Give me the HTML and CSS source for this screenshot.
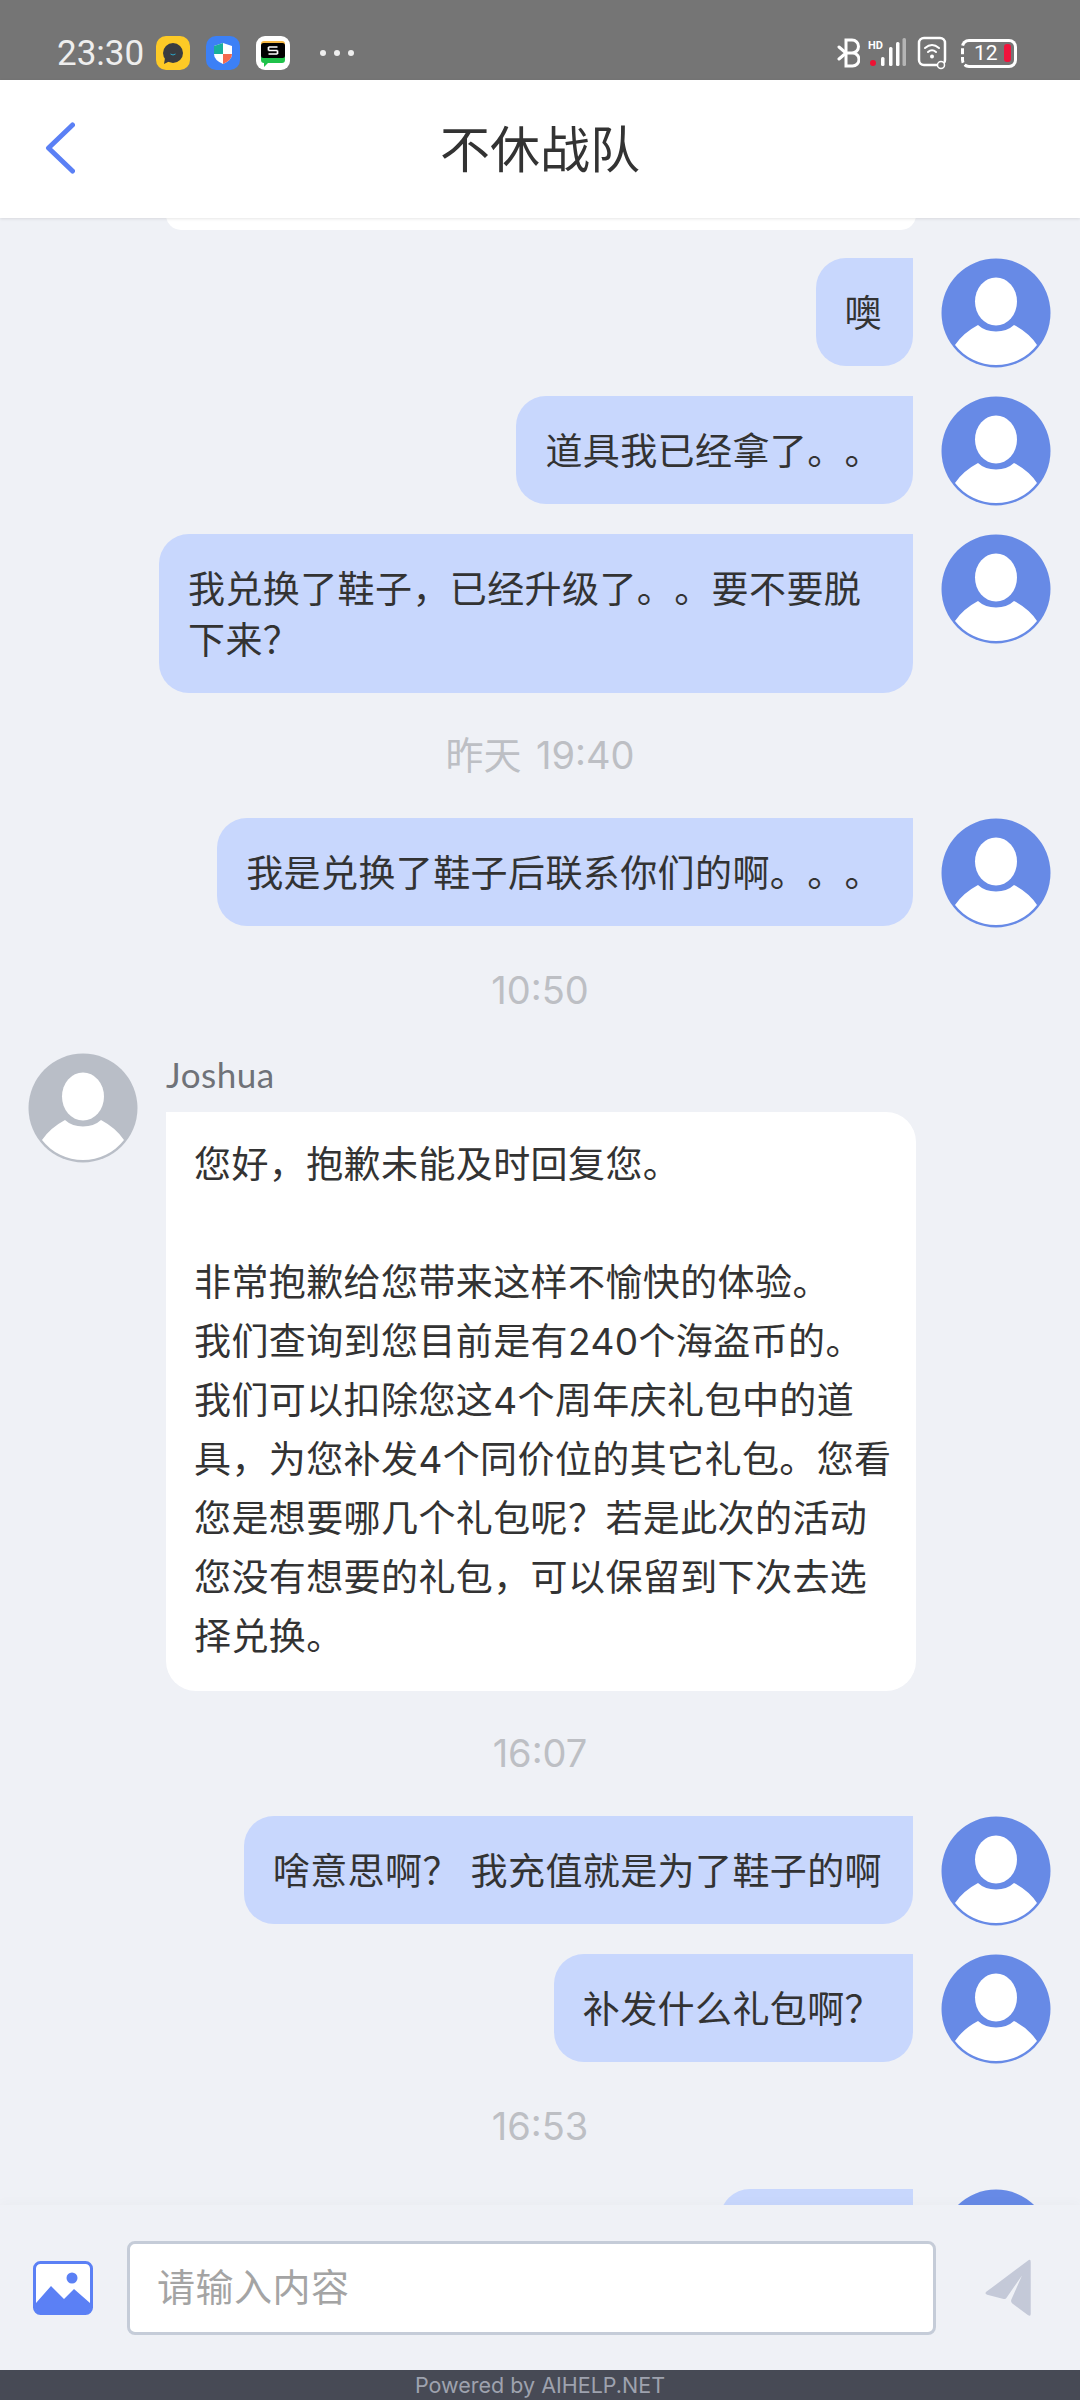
FILE: index.html
```html
<!DOCTYPE html>
<html lang="zh-CN">
<head>
    <meta charset="UTF-8">
    <meta name="viewport" content="width=device-width, initial-scale=1.0">
    <title>不休战队</title>
    <link rel="stylesheet" href="styles.css">
</head>
<body>
    <!-- shared avatar drawing -->
    <svg class="defs" width="0" height="0">
        <symbol id="avatar" viewBox="0 0 110 110">
            <circle cx="55" cy="55" r="54.5" fill="currentColor"/>
            <ellipse cx="55" cy="43.500" rx="21" ry="24" fill="#fff"/>
            <path d="M14 87Q22 75 37 67Q44 73.500 55 73.500Q66 73.500 73 67Q88 75 96 87A52 52 0 0 1 14 87Z" fill="#fff"/>
        </symbol>
    </svg>

    <div class="status-bar">
        <span class="clock">23:30</span>
        <svg class="app-icon" viewBox="0 0 34 34">
            <rect width="34" height="34" rx="10" fill="#fdca26"/>
            <circle cx="17" cy="17" r="10" fill="#3a3c40"/>
            <path d="M9 22l-1 6 6-3z" fill="#3a3c40"/>
            <path d="M14.500 18q2.500 2 5 0" stroke="#2ba6c9" stroke-width="1" fill="none"/>
        </svg>
        <svg class="app-icon" viewBox="0 0 34 34">
            <rect width="34" height="34" rx="10" fill="#3c80f6"/>
            <path d="M17 7l9 3v8q0 6-9 10q-9-4-9-10v-8z" fill="#fff"/>
            <path d="M17 7v11h-9v-8z" fill="#19b09c"/>
            <path d="M17 18h9q0 6-9 10z" fill="#f4694d"/>
        </svg>
        <svg class="app-icon" viewBox="0 0 34 34">
            <rect width="34" height="34" rx="9" fill="#fff"/>
            <path d="M5 8q0-3 3-3h18q3 0 3 3v3h-24z" fill="#f5b744"/>
            <path d="M5 20h24v4q0 3-3 3h-14l-4 4v-4q-3 0-3-3z" fill="#1fc24a"/>
            <rect x="5" y="7" width="24" height="15" rx="2.500" fill="#000"/>
            <path d="M12.500 11h9M12.500 14.500h9M12.500 18h9M12.500 11v3.500M21.500 14.500v3.500" stroke="#fff" stroke-width="1.700" fill="none"/>
        </svg>
        <div class="more-dots"><i></i><i></i><i></i></div>
        <div class="status-right">
            <svg class="ic-bt" width="23" height="30" viewBox="0 0 23 30">
                <path d="M2 9l7 6M2 21l7-6" stroke="#fff" stroke-width="3" stroke-linecap="round"/>
                <path d="M9 2h6a6 6 0 0 1 0 13h-6zM9 15h6.500a6.500 6.500 0 0 1 0 13h-6.500z" stroke="#fff" stroke-width="3" fill="none"/>
            </svg>
            <svg class="ic-signal" width="38" height="30" viewBox="0 0 38 30">
                <text x="0" y="11" class="hd-text">HD</text>
                <circle cx="5" cy="25" r="3" fill="#ee1133"/>
                <rect x="13" y="19" width="3.500" height="9" rx="1.500" fill="#fff"/>
                <rect x="21" y="9" width="3.500" height="19" rx="1.500" fill="#fff"/>
                <rect x="28" y="4" width="3.500" height="24" rx="1.500" fill="#fff"/>
                <rect x="34.500" y="0" width="3.500" height="28" rx="1.500" fill="#b5b5b5"/>
            </svg>
            <svg class="ic-wifi" width="32" height="34" viewBox="0 0 32 34">
                <rect x="2" y="2" width="26" height="27" rx="5" stroke="#fff" stroke-width="2.500" fill="none"/>
                <path d="M8 12q7-6 14 0M11 16q4-3.500 8 0" stroke="#fff" stroke-width="2" fill="none" stroke-linecap="round"/>
                <circle cx="15" cy="20.500" r="2" fill="#fff"/>
                <circle cx="24" cy="29" r="3.500" fill="#757575" stroke="#fff" stroke-width="1.500"/>
            </svg>
            <div class="battery">
                <span class="battery-num">12</span>
                <i class="battery-low"></i>
            </div>
        </div>
    </div>

    <header class="top-bar">
        <svg class="back-icon" width="30" height="52" viewBox="0 0 30 52">
            <path d="M27.500 3L3.500 26l24 23" stroke="#5b80f5" stroke-width="5" fill="none" stroke-linecap="round" stroke-linejoin="round"/>
        </svg>
        <h1>不休战队</h1>
    </header>

    <main class="feed">
        <div class="cut-bubble"></div>

        <div class="msg msg-me">
            <div class="bubble">噢</div>
            <svg class="avatar"><use href="#avatar"/></svg>
        </div>
        <div class="msg msg-me">
            <div class="bubble">道具我已经拿了。。</div>
            <svg class="avatar"><use href="#avatar"/></svg>
        </div>
        <div class="msg msg-me">
            <div class="bubble bubble-wide">我兑换了鞋子，已经升级了。。要不要脱下来？</div>
            <svg class="avatar"><use href="#avatar"/></svg>
        </div>

        <div class="time">昨天 19:40</div>

        <div class="msg msg-me">
            <div class="bubble">我是兑换了鞋子后联系你们的啊。。。</div>
            <svg class="avatar"><use href="#avatar"/></svg>
        </div>

        <div class="time">10:50</div>

        <div class="msg msg-them">
            <svg class="avatar avatar-grey"><use href="#avatar"/></svg>
            <div class="msg-body">
                <div class="sender">Joshua</div>
                <div class="bubble bubble-white">您好，抱歉未能及时回复您。<br><br>非常抱歉给您带来这样不愉快的体验。<br>我们查询到您目前是有240个海盗币的。<br>我们可以扣除您这4个周年庆礼包中的道<br>具，为您补发4个同价位的其它礼包。您看<br>您是想要哪几个礼包呢？若是此次的活动<br>您没有想要的礼包，可以保留到下次去选<br>择兑换。</div>
            </div>
        </div>

        <div class="time">16:07</div>

        <div class="msg msg-me">
            <div class="bubble">啥意思啊？ 我充值就是为了鞋子的啊</div>
            <svg class="avatar"><use href="#avatar"/></svg>
        </div>
        <div class="msg msg-me">
            <div class="bubble">补发什么礼包啊？</div>
            <svg class="avatar"><use href="#avatar"/></svg>
        </div>

        <div class="time">16:53</div>

        <div class="msg msg-me">
            <div class="bubble bubble-last"></div>
            <svg class="avatar"><use href="#avatar"/></svg>
        </div>
    </main>

    <div class="input-bar">
        <svg class="image-icon" width="60" height="54" viewBox="0 0 60 54">
            <rect x="1.500" y="1.500" width="57" height="51" rx="6" fill="#fff" stroke="#5b80f5" stroke-width="3"/>
            <circle cx="39" cy="17" r="5.500" fill="#5b80f5"/>
            <path d="M3 42L18 25l13 13 10-10 16 14v6q0 5-5 5H8q-5 0-5-5z" fill="#5b80f5"/>
        </svg>
        <div class="text-input">请输入内容</div>
        <svg class="send-icon" width="48" height="58" viewBox="0 0 47 60">
            <path d="M45 1q2-1 2 2v54q0 3-3 1L28 46q-2-2-1-4L38 17 22 40q-1 2-4 1L2 37q-3-1-1-3z" fill="#c4c9d8"/>
        </svg>
    </div>

    <footer class="powered">Powered by AIHELP.NET</footer>
</body>
</html>
```

FILE: styles.css
```css
* {
    margin: 0;
    padding: 0;
    box-sizing: border-box;
}

html, body {
    width: 1080px;
    height: 2400px;
    overflow: hidden;
}

body {
    display: flex;
    flex-direction: column;
    background: #eff1f6;
    color: #333;
    font-family: Inter, "Noto Sans CJK SC", sans-serif;
    text-spacing-trim: space-all;
}

.defs {
    position: absolute;
}

/* status bar */
.status-bar {
    height: 80px;
    flex: none;
    display: flex;
    align-items: center;
    padding: 26px 63px 0 57px;
    background: #757575;
}

.clock {
    width: 99px;
    color: #eee;
    font-family: Roboto, sans-serif;
    font-size: 35px;
    line-height: 1;
}

.app-icon {
    width: 34px;
    height: 34px;
    margin-right: 16px;
}

.more-dots {
    display: flex;
    gap: 8px;
    margin-left: 14px;
}

.more-dots i {
    width: 6px;
    height: 6px;
    border-radius: 50%;
    background: #eee;
}

.status-right {
    display: flex;
    align-items: center;
    margin-left: auto;
}

.ic-bt {
    margin-right: 8px;
}

.ic-signal {
    margin-right: 11px;
}

.ic-wifi {
    margin-right: 12px;
}

.hd-text {
    fill: #fff;
    font-family: Roboto, sans-serif;
    font-size: 11px;
    font-weight: 700;
}

.battery {
    width: 56px;
    height: 29px;
    display: flex;
    align-items: center;
    justify-content: space-between;
    padding: 0 3px 0 10px;
    border: 3px solid #fff;
    border-left-style: dashed;
    border-radius: 8px;
}

.battery-num {
    color: #fff;
    font-family: Roboto, sans-serif;
    font-size: 21px;
    line-height: 1;
}

.battery-low {
    width: 7px;
    height: 18px;
    border-radius: 3px;
    background: #f0143c;
}

/* title bar */
.top-bar {
    height: 138px;
    flex: none;
    position: relative;
    z-index: 2;
    display: flex;
    align-items: center;
    justify-content: center;
    padding-bottom: 6px;
    background: #fff;
    box-shadow: 0 1px 3px rgba(0, 0, 0, 0.1);
}

.back-icon {
    position: absolute;
    left: 45px;
    top: 42px;
}

.top-bar h1 {
    font-size: 50px;
    font-weight: 400;
    color: #333;
}

/* message list */
.feed {
    flex: 1;
    min-height: 0;
    overflow: hidden;
    display: flex;
    flex-direction: column;
}

.cut-bubble {
    flex: none;
    width: 750px;
    height: 30px;
    margin: -18px 0 28px 166px;
    background: #fff;
    border-radius: 30px;
}

.msg {
    flex: none;
    display: flex;
    align-items: flex-start;
    gap: 28px;
    margin-bottom: 28px;
}

.msg-me {
    justify-content: flex-end;
    padding-right: 29px;
}

.msg-them {
    padding-left: 28px;
}

.avatar {
    flex: none;
    width: 110px;
    height: 110px;
    color: #678ae6;
}

.avatar-grey {
    color: #b9bec7;
}

.bubble {
    padding: 30px 31px 27px 29px;
    background: #c8d7fd;
    border-radius: 30px 0 30px 30px;
    font-size: 37px;
    line-height: 51px;
    letter-spacing: 0.400px;
}

.bubble-wide {
    width: 754px;
}

.bubble-last {
    width: 193px;
    height: 108px;
}

.msg-body {
    width: 750px;
}

.sender {
    height: 59px;
    color: #6f7278;
    font-family: Lato, sans-serif;
    font-size: 35px;
    letter-spacing: 0.500px;
    line-height: 43px;
}

.bubble-white {
    padding: 23px 20px 25px 28px;
    background: #fff;
    border-radius: 0 30px 30px 30px;
    line-height: 59px;
}

.time {
    flex: none;
    height: 97px;
    color: #bdbfc4;
    font-size: 38px;
    word-spacing: 4px;
    line-height: 69px;
    text-align: center;
}

/* input area */
.input-bar {
    height: 165px;
    flex: none;
    position: relative;
    z-index: 2;
    display: flex;
    align-items: center;
    padding: 0 48px 0 33px;
    background: #eff1f6;
    box-shadow: 0 -4px 10px rgba(0, 0, 0, 0.02);
}

.image-icon {
    flex: none;
    margin-right: 34px;
}

.text-input {
    flex: 1;
    height: 94px;
    margin-right: 48px;
    padding-left: 27px;
    background: #fff;
    border: 3px solid #c5ccd8;
    border-radius: 8px;
    color: #a4a4a4;
    font-size: 38px;
    letter-spacing: 0.500px;
    line-height: 86px;
}

.send-icon {
    flex: none;
}

.powered {
    height: 30px;
    flex: none;
    background: #474a55;
    color: #9ea2ae;
    font-family: Inter, sans-serif;
    font-size: 21.500px;
    line-height: 30px;
    text-align: center;
}
```
